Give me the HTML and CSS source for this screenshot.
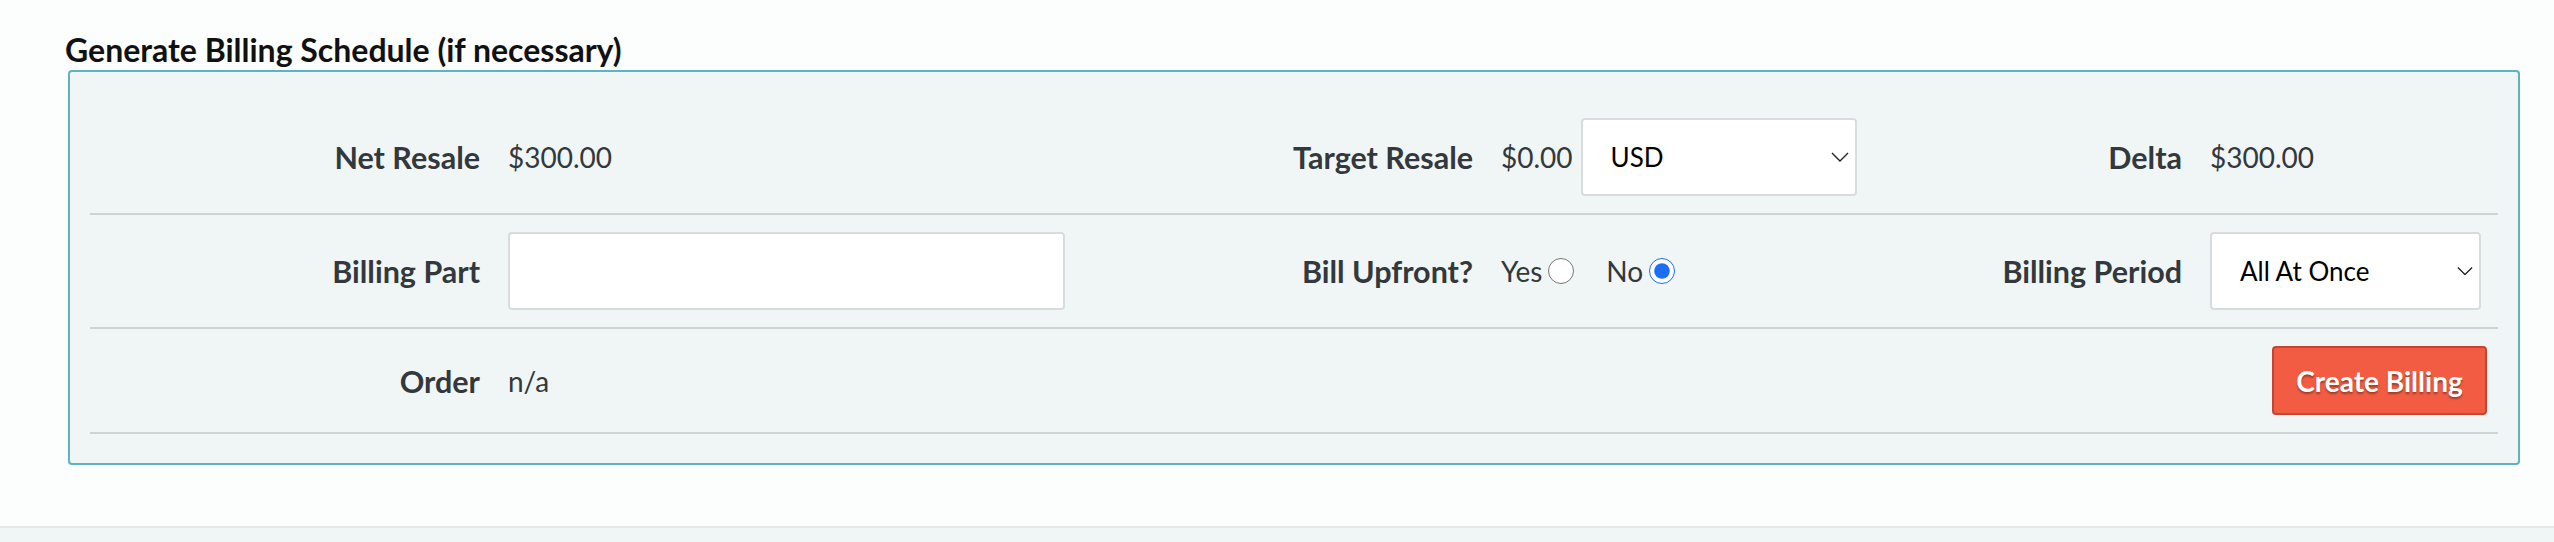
FILE: index.html
```html
<!DOCTYPE html>
<html lang="en">
<head>
<meta charset="utf-8">
<title>Generate Billing Schedule</title>
<link rel="stylesheet" href="styles.css">
</head>
<body>
<div class="page">
  <h2 class="section-title">Generate Billing Schedule (if necessary)</h2>
  <div class="billing-box">
    <table class="billing-table">
      <colgroup>
        <col class="c1"><col class="c2"><col class="c3"><col class="c4"><col class="c5"><col class="c6">
      </colgroup>
      <tr class="row-tall">
        <th>Net Resale</th>
        <td>$300.00</td>
        <th>Target Resale</th>
        <td>
          <div class="inline">
            <span>$0.00</span>
            <div class="select-wrap select-currency">
              <select class="select"><option>USD</option></select>
              <svg class="chev" viewBox="0 0 18 10" width="18" height="10"><path d="M1 1l8 8 8-8" fill="none" stroke="#222" stroke-width="1.4"/></svg>
            </div>
          </div>
        </td>
        <th>Delta</th>
        <td>$300.00</td>
      </tr>
      <tr class="row-tall">
        <th>Billing Part</th>
        <td><input class="text-input" type="text"></td>
        <th>Bill Upfront?</th>
        <td>
          <div class="inline radios">
            <label class="radio">Yes<input type="radio" name="upfront"></label>
            <label class="radio">No<input type="radio" name="upfront" checked></label>
          </div>
        </td>
        <th>Billing Period</th>
        <td>
          <div class="select-wrap select-period">
            <select class="select"><option>All At Once</option></select>
            <svg class="chev" viewBox="0 0 18 10" width="16" height="9"><path d="M1 1l8 8 8-8" fill="none" stroke="#222" stroke-width="1.4"/></svg>
          </div>
        </td>
      </tr>
      <tr class="row-short">
        <th>Order</th>
        <td>n/a</td>
        <th></th>
        <td></td>
        <th></th>
        <td class="btn-cell"><button class="btn-create" type="button">Create Billing</button></td>
      </tr>
    </table>
  </div>
  <div class="footer-band"></div>
</div>
</body>
</html>
```
FILE: styles.css
```css
html, body {
  margin: 0;
  padding: 0;
  background: #fcfdfd;
}
body {
  font-family: "Lato", "Liberation Sans", sans-serif;
  color: #33383c;
  font-size: 28px;
}
.page {
  padding-top: 30px;
}
.section-title {
  margin: 0 0 0 65px;
  font-size: 32px;
  line-height: 40px;
  font-weight: 700;
  color: #111;
}
.billing-box {
  margin: 0 34px 0 68px;
  border: 2px solid #5fb2c2;
  border-radius: 4px;
  background: #f0f5f6;
  padding: 29px 20px 29px 20px;
}
.billing-table {
  width: 100%;
  table-layout: fixed;
  border-collapse: collapse;
}
.c1 { width: 404px; }
.c2 { width: 585px; }
.c3 { width: 408px; }
.c4 { width: 381px; }
.c5 { width: 328px; }
.c6 { width: 302px; }
.billing-table tr {
  border-bottom: 2px solid #cfd3d6;
}
.billing-table th,
.billing-table td {
  padding: 17px 14px;
  vertical-align: middle;
  white-space: nowrap;
}
.row-tall th,
.row-tall td {
  height: 78px;
}
.row-short th,
.row-short td {
  height: 69px;
}
.billing-table th {
  text-align: right;
  font-size: 30.5px;
  font-weight: 700;
  color: #33383c;
}
.billing-table td {
  text-align: left;
  font-weight: 400;
}
.inline {
  display: flex;
  align-items: center;
  gap: 8px;
}
.select-wrap {
  position: relative;
  display: inline-block;
}
.select {
  appearance: none;
  -webkit-appearance: none;
  display: block;
  height: 78px;
  border: 2px solid #d8dcdf;
  border-radius: 4px;
  background: #fff;
  color: #000;
  font-family: "Lato", "Liberation Sans", sans-serif;
  font-size: 26px;
  padding: 0 40px 0 28px;
  outline: none;
}
.select-currency .select { width: 276px; }
.select-period .select { width: 271px; }
.chev {
  position: absolute;
  top: 50%;
  transform: translateY(-50%);
  pointer-events: none;
}
.select-currency .chev { right: 8px; }
.select-period .chev { right: 8px; }
.text-input {
  display: block;
  box-sizing: border-box;
  width: 557px;
  height: 78px;
  border: 2px solid #d8dcdf;
  border-radius: 4px;
  background: #fff;
  outline: none;
}
.radios {
  gap: 32px;
}
.radio {
  display: inline-flex;
  align-items: center;
  gap: 6px;
}
.radio input {
  width: 26px;
  height: 26px;
  margin: 0;
  accent-color: #1a6ff5;
}
.btn-cell {
  text-align: right !important;
  padding-right: 11px !important;
}
.btn-create {
  width: 215px;
  height: 69px;
  border: 2px solid #c9432f;
  border-radius: 4px;
  background: #f25c42;
  color: #fff;
  font-family: "Lato", "Liberation Sans", sans-serif;
  font-size: 28px;
  font-weight: 700;
  text-shadow: 0 2px 2px rgba(0, 0, 0, 0.35);
  padding: 0;
}
.footer-band {
  margin-top: 61px;
  height: 20px;
  border-top: 2px solid #e3e9eb;
  background: #f0f5f6;
}
```
